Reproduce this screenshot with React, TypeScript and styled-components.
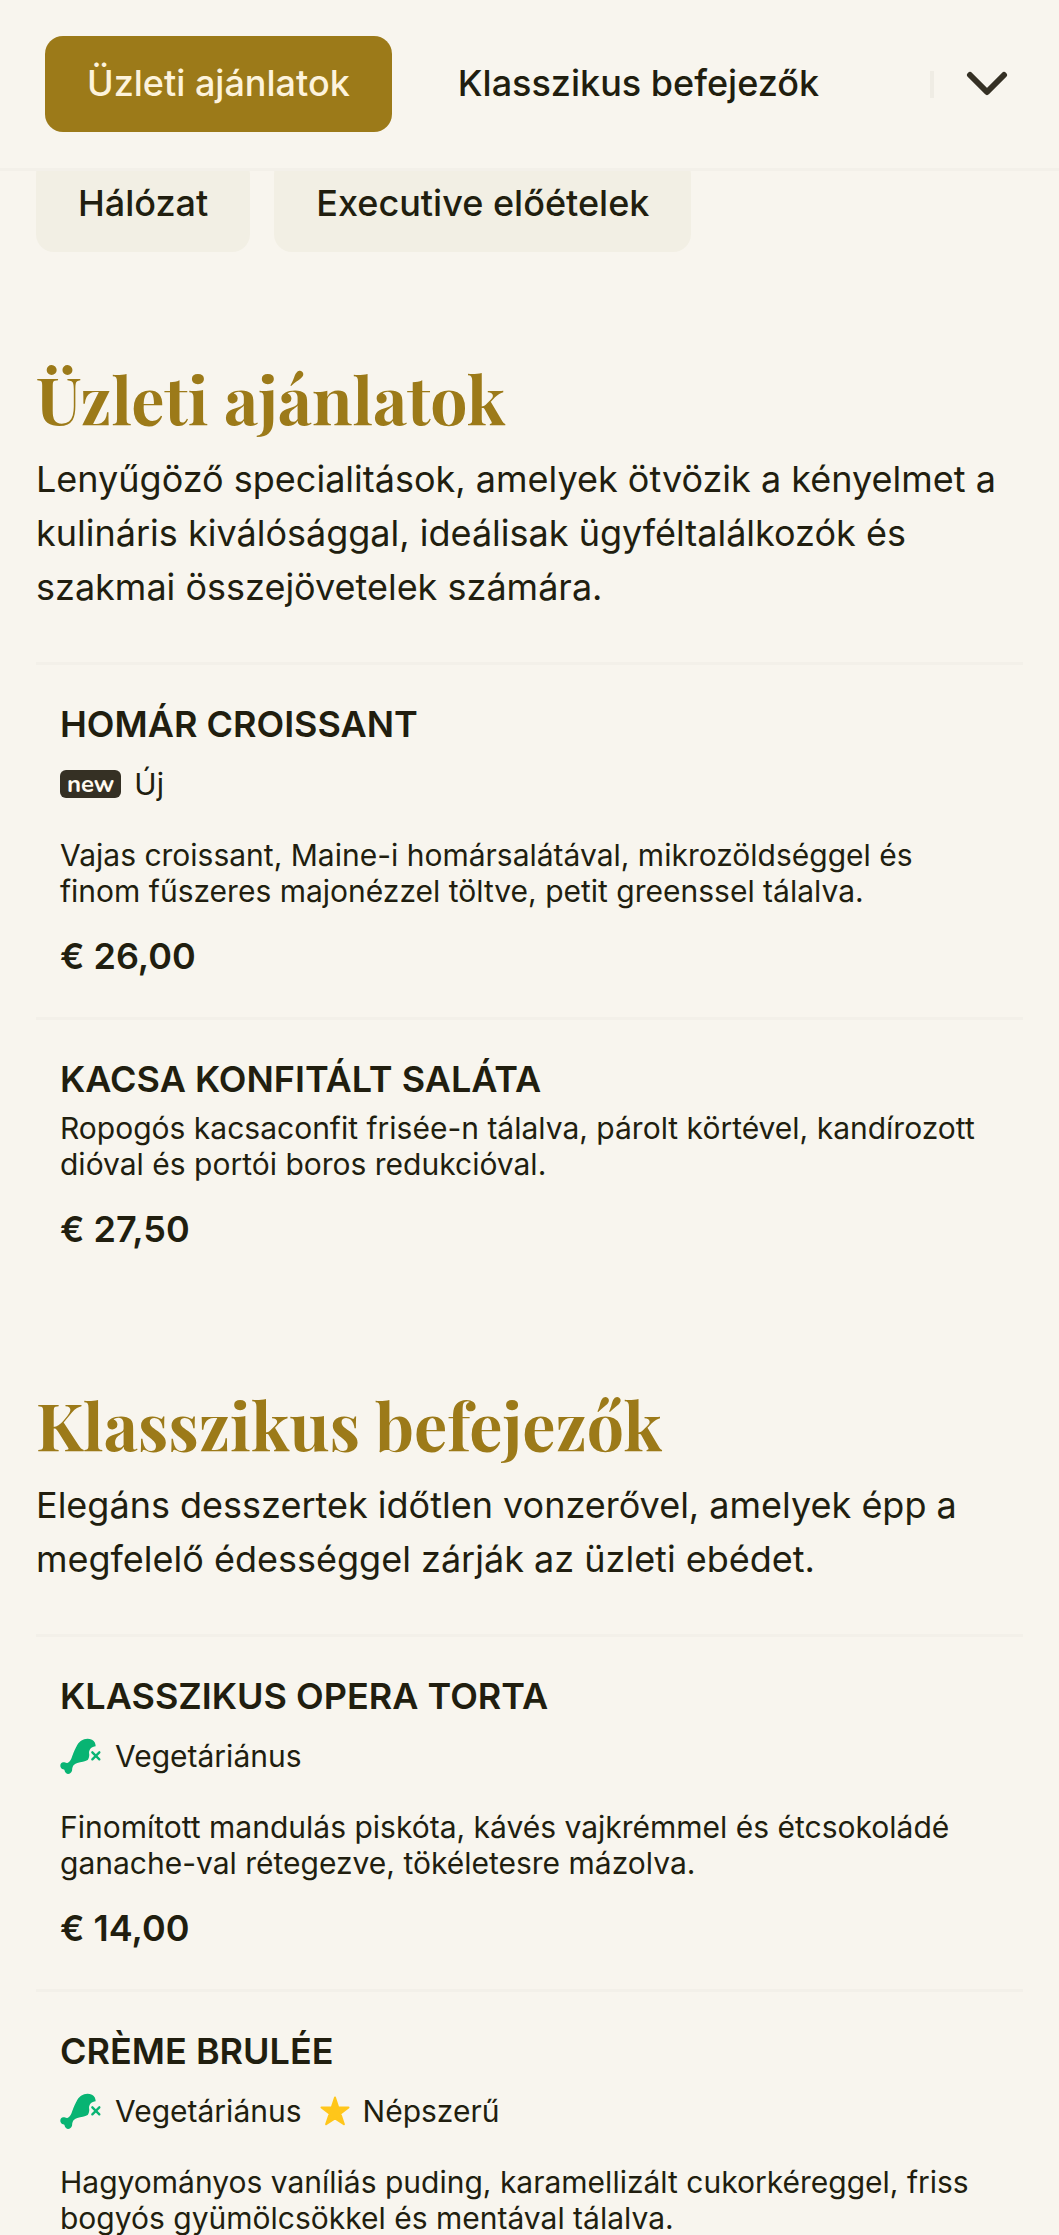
import React, { useState } from "react";
import styled, { createGlobalStyle } from "styled-components";

const color = {
  page: "#f8f5ee",
  chip: "#f2efe4",
  line: "#f3f0e9",
  separator: "#efece4",
  accent: "#9c7a19",
  onAccent: "#fdf3dc",
  text: "#211e0f",
  dark: "#353024",
  green: "#08b473",
  yellow: "#ffc61a",
};

const GlobalStyle = createGlobalStyle`
  *, *::before, *::after { box-sizing: border-box; }
  body {
    margin: 0;
    background: ${color.page};
    color: ${color.text};
    font-family: Inter, "Liberation Sans", sans-serif;
    font-size: 36px;
    line-height: 54px;
  }
  h2, h3, p, ul { margin: 0; padding: 0; }
  ul { list-style: none; }
`;

const Header = styled.header`
  position: fixed;
  inset: 0 0 auto;
  z-index: 1;
  display: flex;
  align-items: center;
  justify-content: space-between;
  height: 171px;
  padding: 0 39px 0 45px;
  background: ${color.page};
  border-bottom: 3px solid ${color.line};
`;

const Tabs = styled.nav`
  display: flex;
  gap: 24px;
`;

const Pill = styled.a<{ $tone: "active" | "plain" | "soft" }>`
  padding: 20px 42px 22px;
  border-radius: 18px;
  font-weight: 500;
  white-space: nowrap;
  text-decoration: none;
  color: ${(p) => (p.$tone === "active" ? color.onAccent : color.text)};
  background: ${(p) =>
    p.$tone === "active" ? color.accent : p.$tone === "soft" ? color.chip : "transparent"};
`;

const Toggle = styled.div`
  display: flex;
  align-items: center;
  gap: 20px;
`;

const Divider = styled.span`
  width: 4px;
  height: 27px;
  background: ${color.separator};
`;

const IconButton = styled.button`
  display: flex;
  padding: 12px;
  border: 0;
  background: none;
  color: ${color.dark};
  cursor: pointer;
`;

const Main = styled.main`
  padding: 156px 36px 0;
`;

const Chips = styled.nav`
  display: flex;
  flex-wrap: wrap;
  gap: 24px;
  margin-bottom: 12px;
`;

const Section = styled.section`
  padding-top: 96px;
`;

const Heading = styled.h2`
  margin-bottom: 16px;
  color: ${color.accent};
  font-family: "Playfair Display", "Liberation Serif", serif;
  font-size: 66px;
  font-weight: 700;
  line-height: 76px;
`;

const Intro = styled.p`
  margin-bottom: 48px;
`;

const Dish = styled.li`
  padding: 37px 24px 39px;
  border-top: 3px solid ${color.line};
`;

const Title = styled.h3`
  margin-bottom: 9px;
  font-size: 36px;
  font-weight: 600;
  line-height: 44px;
  text-transform: uppercase;
`;

const Tags = styled.ul`
  display: flex;
  flex-wrap: wrap;
  gap: 18px;
  padding: 11px 0 35px;
  font-size: 30px;
  line-height: 36px;
`;

const Tag = styled.li`
  display: flex;
  align-items: center;
  gap: 13px;
  height: 36px;
`;

const NewBadge = styled.span`
  padding: 0 7px;
  border-radius: 6px;
  background: ${color.dark};
  color: #fffaf0;
  font-family: Nunito, Lato, sans-serif;
  font-size: 24px;
  font-weight: 700;
  line-height: 28px;
`;

const Details = styled.p`
  margin-bottom: 25px;
  font-size: 30px;
  line-height: 36px;
`;

const Price = styled.p`
  font-weight: 600;
  line-height: 44px;
`;

const ChevronIcon = () => (
  <svg width="42" height="28" viewBox="0 0 42 28" fill="none" aria-hidden="true">
    <path d="M4 5 21 22 38 5" stroke="currentColor" strokeWidth="6" strokeLinecap="round" strokeLinejoin="round" />
  </svg>
);

const DrumstickIcon = () => (
  <svg width="42" height="36" viewBox="0 0 126 108" aria-hidden="true">
    <path
      fill={color.green}
      d="M49 26C58 6 78-3 96 5c8 4 11 12 11 20-12 1-20 9-20 20 2 7 0 15-4 21-8 5-20 6-31 9-8 3-13 7-14 12-2 4-1 7-2 11-2 8-12 13-18 7-3-3-4-7-5-10-5-1-9-2-11-7-3-7 1-15 8-15 5 0 8 3 12 2 9-3 12-13 16-24 3-9 6-16 11-25Z"
    />
    <path d="M97 43l21 21M118 43L97 64" stroke={color.green} strokeWidth="7" strokeLinecap="round" fill="none" />
  </svg>
);

const StarIcon = () => (
  <svg width="30" height="30" viewBox="0 0 30 30" aria-hidden="true">
    <path
      d="M15 1.5 18.2 11.4H28.5L20.3 17.6 23.9 28.2 15 22.3 6.1 28.2 9.7 17.6 1.5 11.4H11.8Z"
      fill={color.yellow}
      stroke={color.yellow}
      strokeWidth="2"
      strokeLinejoin="round"
    />
  </svg>
);

type TagKind = "new" | "vegetarian" | "popular";

const tagParts: Record<TagKind, { icon: React.ReactNode; label: string }> = {
  new: { icon: <NewBadge>new</NewBadge>, label: "Új" },
  vegetarian: { icon: <DrumstickIcon />, label: "Vegetáriánus" },
  popular: { icon: <StarIcon />, label: "Népszerű" },
};

interface MenuDish {
  name: string;
  tags: TagKind[];
  details: string;
  price: string;
}

interface MenuSection {
  id: string;
  name: string;
  intro: string;
  dishes: MenuDish[];
}

const sections: MenuSection[] = [
  {
    id: "uzleti-ajanlatok",
    name: "Üzleti ajánlatok",
    intro:
      "Lenyűgöző specialitások, amelyek ötvözik a kényelmet a kulináris kiválósággal, ideálisak ügyféltalálkozók és szakmai összejövetelek számára.",
    dishes: [
      {
        name: "Homár croissant",
        tags: ["new"],
        details:
          "Vajas croissant, Maine-i homársalátával, mikrozöldséggel és finom fűszeres majonézzel töltve, petit greenssel tálalva.",
        price: "€ 26,00",
      },
      {
        name: "Kacsa konfitált saláta",
        tags: [],
        details:
          "Ropogós kacsaconfit frisée-n tálalva, párolt körtével, kandírozott dióval és portói boros redukcióval.",
        price: "€ 27,50",
      },
    ],
  },
  {
    id: "klasszikus-befejezok",
    name: "Klasszikus befejezők",
    intro:
      "Elegáns desszertek időtlen vonzerővel, amelyek épp a megfelelő édességgel zárják az üzleti ebédet.",
    dishes: [
      {
        name: "Klasszikus opera torta",
        tags: ["vegetarian"],
        details:
          "Finomított mandulás piskóta, kávés vajkrémmel és étcsokoládé ganache-val rétegezve, tökéletesre mázolva.",
        price: "€ 14,00",
      },
      {
        name: "Crème brulée",
        tags: ["vegetarian", "popular"],
        details:
          "Hagyományos vaníliás puding, karamellizált cukorkéreggel, friss bogyós gyümölcsökkel és mentával tálalva.",
        price: "",
      },
    ],
  },
];

export default function App() {
  const [active, setActive] = useState(sections[0].id);

  return (
    <>
      <GlobalStyle />
      <Header>
        <Tabs>
          {sections.map((s) => (
            <Pill
              key={s.id}
              href={`#${s.id}`}
              $tone={s.id === active ? "active" : "plain"}
              onClick={() => setActive(s.id)}
            >
              {s.name}
            </Pill>
          ))}
        </Tabs>
        <Toggle>
          <Divider />
          <IconButton type="button" aria-label="Kategóriák">
            <ChevronIcon />
          </IconButton>
        </Toggle>
      </Header>
      <Main>
        <Chips>
          <Pill href="#halozat" $tone="soft">Hálózat</Pill>
          <Pill href="#executive-eloetelek" $tone="soft">Executive előételek</Pill>
        </Chips>
        {sections.map((s) => (
          <Section key={s.id} id={s.id}>
            <Heading>{s.name}</Heading>
            <Intro>{s.intro}</Intro>
            <ul>
              {s.dishes.map((dish) => (
                <Dish key={dish.name}>
                  <Title>{dish.name}</Title>
                  {dish.tags.length > 0 && (
                    <Tags>
                      {dish.tags.map((tag) => (
                        <Tag key={tag}>
                          {tagParts[tag].icon}
                          {tagParts[tag].label}
                        </Tag>
                      ))}
                    </Tags>
                  )}
                  <Details>{dish.details}</Details>
                  {dish.price && <Price>{dish.price}</Price>}
                </Dish>
              ))}
            </ul>
          </Section>
        ))}
      </Main>
    </>
  );
}
